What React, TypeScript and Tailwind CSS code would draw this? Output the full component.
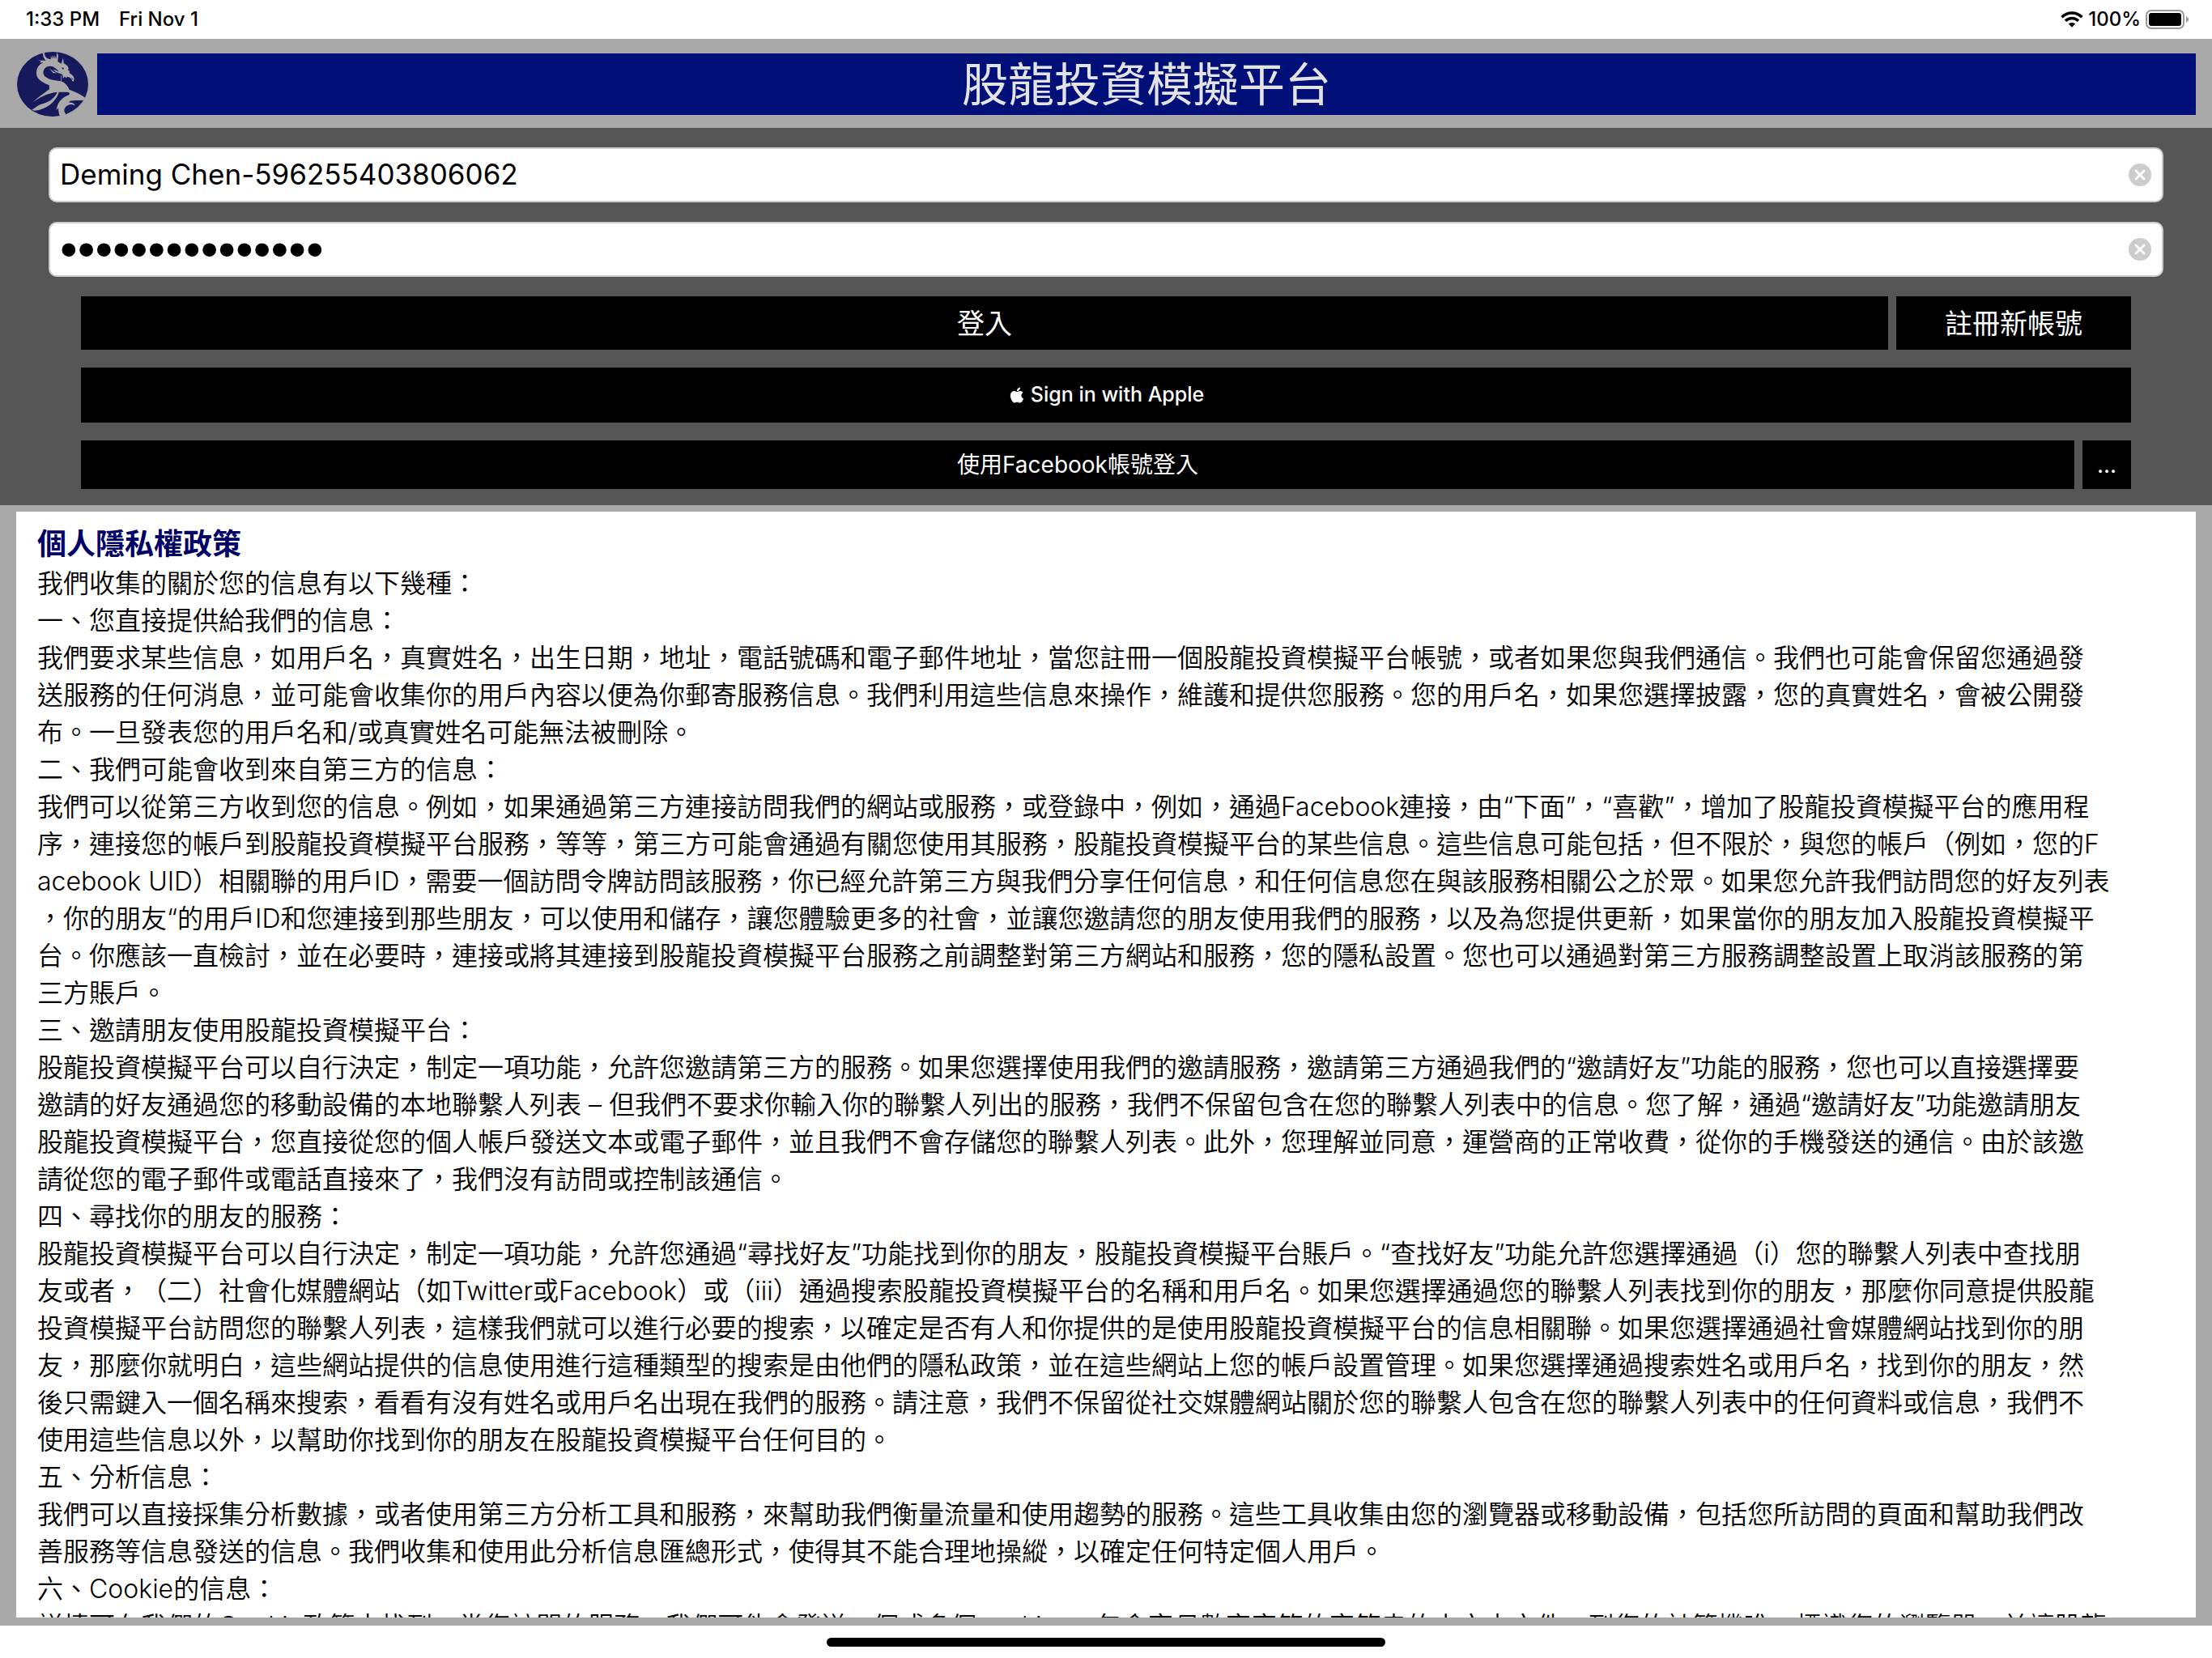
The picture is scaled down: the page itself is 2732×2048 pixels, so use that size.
import { useState } from "react";
import { FaApple } from "react-icons/fa";

const POLICY_TITLE = "個人隱私權政策";

const POLICY_LINES = [
  "我們收集的關於您的信息有以下幾種：",
  "一、您直接提供給我們的信息：",
  "我們要求某些信息，如用戶名，真實姓名，出生日期，地址，電話號碼和電子郵件地址，當您註冊一個股龍投資模擬平台帳號，或者如果您與我們通信。我們也可能會保留您通過發",
  "送服務的任何消息，並可能會收集你的用戶內容以便為你郵寄服務信息。我們利用這些信息來操作，維護和提供您服務。您的用戶名，如果您選擇披露，您的真實姓名，會被公開發",
  "布。一旦發表您的用戶名和/或真實姓名可能無法被刪除。",
  "二、我們可能會收到來自第三方的信息：",
  "我們可以從第三方收到您的信息。例如，如果通過第三方連接訪問我們的網站或服務，或登錄中，例如，通過Facebook連接，由“下面”，“喜歡”，增加了股龍投資模擬平台的應用程",
  "序，連接您的帳戶到股龍投資模擬平台服務，等等，第三方可能會通過有關您使用其服務，股龍投資模擬平台的某些信息。這些信息可能包括，但不限於，與您的帳戶（例如，您的F",
  "acebook UID）相關聯的用戶ID，需要一個訪問令牌訪問該服務，你已經允許第三方與我們分享任何信息，和任何信息您在與該服務相關公之於眾。如果您允許我們訪問您的好友列表",
  "，你的朋友“的用戶ID和您連接到那些朋友，可以使用和儲存，讓您體驗更多的社會，並讓您邀請您的朋友使用我們的服務，以及為您提供更新，如果當你的朋友加入股龍投資模擬平",
  "台。你應該一直檢討，並在必要時，連接或將其連接到股龍投資模擬平台服務之前調整對第三方網站和服務，您的隱私設置。您也可以通過對第三方服務調整設置上取消該服務的第",
  "三方賬戶。",
  "三、邀請朋友使用股龍投資模擬平台：",
  "股龍投資模擬平台可以自行決定，制定一項功能，允許您邀請第三方的服務。如果您選擇使用我們的邀請服務，邀請第三方通過我們的“邀請好友”功能的服務，您也可以直接選擇要",
  "邀請的好友通過您的移動設備的本地聯繫人列表 – 但我們不要求你輸入你的聯繫人列出的服務，我們不保留包含在您的聯繫人列表中的信息。您了解，通過“邀請好友”功能邀請朋友",
  "股龍投資模擬平台，您直接從您的個人帳戶發送文本或電子郵件，並且我們不會存儲您的聯繫人列表。此外，您理解並同意，運營商的正常收費，從你的手機發送的通信。由於該邀",
  "請從您的電子郵件或電話直接來了，我們沒有訪問或控制該通信。",
  "四、尋找你的朋友的服務：",
  "股龍投資模擬平台可以自行決定，制定一項功能，允許您通過“尋找好友”功能找到你的朋友，股龍投資模擬平台賬戶。“查找好友”功能允許您選擇通過（i）您的聯繫人列表中查找朋",
  "友或者，（二）社會化媒體網站（如Twitter或Facebook）或（iii）通過搜索股龍投資模擬平台的名稱和用戶名。如果您選擇通過您的聯繫人列表找到你的朋友，那麼你同意提供股龍",
  "投資模擬平台訪問您的聯繫人列表，這樣我們就可以進行必要的搜索，以確定是否有人和你提供的是使用股龍投資模擬平台的信息相關聯。如果您選擇通過社會媒體網站找到你的朋",
  "友，那麼你就明白，這些網站提供的信息使用進行這種類型的搜索是由他們的隱私政策，並在這些網站上您的帳戶設置管理。如果您選擇通過搜索姓名或用戶名，找到你的朋友，然",
  "後只需鍵入一個名稱來搜索，看看有沒有姓名或用戶名出現在我們的服務。請注意，我們不保留從社交媒體網站關於您的聯繫人包含在您的聯繫人列表中的任何資料或信息，我們不",
  "使用這些信息以外，以幫助你找到你的朋友在股龍投資模擬平台任何目的。",
  "五、分析信息：",
  "我們可以直接採集分析數據，或者使用第三方分析工具和服務，來幫助我們衡量流量和使用趨勢的服務。這些工具收集由您的瀏覽器或移動設備，包括您所訪問的頁面和幫助我們改",
  "善服務等信息發送的信息。我們收集和使用此分析信息匯總形式，使得其不能合理地操縱，以確定任何特定個人用戶。",
  "六、Cookie的信息：",
  "詳情可在我們的Cookie政策中找到。當您訪問的服務，我們可能會發送一個或多個cookies，包含字母數字字符的字符串的小文本文件，到您的計算機唯一標識您的瀏覽器，並讓股龍",
];

const StatusBar = () => (
  <div className="flex h-12 shrink-0 items-center justify-between bg-white pr-7 pl-8 text-2xl font-medium text-black">
    <div className="flex gap-6">
      <span>1:33 PM</span>
      <span>Fri Nov 1</span>
    </div>
    <div className="flex items-center gap-1.5">
      <svg width="28" height="20" viewBox="0 0 28 20" aria-label="Wi-Fi">
        <g fill="none" stroke="#000" strokeWidth="3.6">
          <path d="M1.5 7.2 C8.5 .2 19.5 .2 26.5 7.2" />
          <path d="M6 11.8 C10.5 7.4 17.5 7.4 22 11.8" />
        </g>
        <path d="M9.8 15.6 C12.2 13.4 15.8 13.4 18.2 15.6 L14 19.8 Z" />
      </svg>
      <span>100%</span>
      <svg width="54" height="24" viewBox="0 0 54 24" aria-label="Battery">
        <rect x="1" y="1" width="46" height="22" rx="6" fill="none" stroke="#999" strokeWidth="2" />
        <rect x="4" y="4" width="40" height="16" rx="3" />
        <path d="M50 8 C54 9.5 54 14.5 50 16 Z" fill="#999" />
      </svg>
    </div>
  </div>
);

const DragonLogo = () => (
  <svg className="h-20 w-[88px] shrink-0" viewBox="63 192 264 240" aria-label="股龍">
    <ellipse cx="195" cy="312" rx="132" ry="120" fill="#17195d" />
    <g fill="#a9a9a9">
      <path d="M138 220 L152 226 L148 232 L160 232 C140 240 132 260 136 280 C142 300 165 308 182 316 L183 330 C165 345 140 360 120 380 C145 362 170 346 212 341 C205 362 180 380 152 386 C138 392 128 400 118 407 L128 410 C155 408 185 395 203 370 C212 358 216 350 218 341 L250 341 C260 343 260 349 252 353 C228 362 212 380 209 408 L216 400 C216 410 218 422 222 432 L245 424 C234 412 236 398 252 390 C262 385 270 387 278 392 C276 384 268 379 255 380 L258 375 C275 370 292 373 308 372 L316 362 C300 350 280 340 257 332 C252 320 243 308 230 302 C205 298 185 297 170 286 C156 276 158 256 172 248 C185 243 195 246 204 252 C213 258 216 262 218 266 L210 262 L196 257 C203 265 212 270 222 272 L230 275 C232 282 235 284 232 291 L240 284 L245 289 L250 284 C260 286 266 292 268 300 L272 303 L275 292 C274 282 265 275 257 270 L258 263 L252 260 L254 254 C252 244 246 240 236 235 L234 214 L227 236 L214 228 L216 205 L211 194 L208 218 L203 205 L201 218 L195 203 L194 218 L188 206 L188 220 C176 218 164 212 165 195 L159 196 C158 208 162 218 170 224 L154 224 Z" />
      <path d="M226 280 h2 v22 h-2 Z" />
    </g>
    <path d="M182 252 L196 264 L212 272 L196 270 Z" fill="#a9a9a9" />
    <path d="M228 249 L238 253 L233 258 Z M262 287 L270 292 L268 295 Z" fill="#17195d" />
  </svg>
);

const Header = () => (
  <header className="flex h-[110px] shrink-0 items-center gap-[11px] bg-[#a9a9a9] pt-0.5 pr-5 pl-[21px]">
    <DragonLogo />
    <h1 className="flex h-[76px] flex-1 items-center justify-center bg-[#001078] text-[57px] leading-none font-normal text-[#e3e3e3]">
      股龍投資模擬平台
    </h1>
  </header>
);

interface ClearableFieldProps {
  label: string;
  type: "text" | "password";
  value: string;
  onChange: (value: string) => void;
}

const ClearableField = ({ label, type, value, onChange }: ClearableFieldProps) => (
  <div className="flex h-[68px] items-center overflow-hidden rounded-[10px] border-2 border-[#ccc] bg-white pr-[13px] pl-3">
    <input
      type={type}
      aria-label={label}
      value={value}
      onChange={(e) => onChange(e.target.value)}
      className={
        type === "password"
          ? "h-full min-w-0 flex-1 pb-0.5 font-['Liberation_Sans',sans-serif] text-[62px] text-black outline-none"
          : "h-full min-w-0 flex-1 pb-0.5 text-[35px] text-black outline-none"
      }
    />
    <button type="button" aria-label={`清除${label}`} onClick={() => onChange("")}>
      <svg width="28" height="28" viewBox="0 0 28 28">
        <circle cx="14" cy="14" r="14" fill="#ccc" />
        <path d="M9 9 L19 19 M19 9 L9 19" stroke="#fff" strokeWidth="2.8" strokeLinecap="round" />
      </svg>
    </button>
  </div>
);

const LoginForm = () => {
  const [account, setAccount] = useState("Deming Chen-596255403806062");
  const [password, setPassword] = useState("596255403806062");

  return (
    <form
      className="shrink-0 bg-[#555] px-[60px] pt-6 pb-5"
      onSubmit={(e) => e.preventDefault()}
    >
      <div className="flex flex-col gap-6">
        <ClearableField label="帳號" type="text" value={account} onChange={setAccount} />
        <ClearableField label="密碼" type="password" value={password} onChange={setPassword} />
      </div>
      <div className="mt-6 flex flex-col gap-[22px] px-10 text-white">
        <div className="flex h-[66px] gap-2.5 text-[34px]">
          <button type="submit" className="flex-1 bg-black">
            登入
          </button>
          <button type="button" className="w-[290px] bg-black">
            註冊新帳號
          </button>
        </div>
        <button
          type="button"
          className="flex h-[68px] items-center justify-center gap-1.5 bg-black text-[25px] font-medium"
        >
          <FaApple className="size-[22px]" />
          Sign in with Apple
        </button>
        <div className="flex h-[60px] gap-2.5 text-[28px]">
          <button type="button" className="flex-1 bg-black">
            使用Facebook帳號登入
          </button>
          <button type="button" aria-label="更多登入方式" className="w-[60px] bg-black">
            ...
          </button>
        </div>
      </div>
    </form>
  );
};

const PrivacyPolicy = () => (
  <main className="flex min-h-0 flex-1 bg-[#a9a9a9] px-5 pt-2 pb-2.5">
    <article className="flex-1 overflow-hidden bg-white px-[26px] pt-3.5 whitespace-pre text-black">
      <h2 className="text-4xl leading-[52px] font-bold text-[#000066]">{POLICY_TITLE}</h2>
      {POLICY_LINES.map((line) => (
        <p key={line} className="text-[32px] leading-[46px] font-[350]">
          {line}
        </p>
      ))}
    </article>
  </main>
);

export default function App() {
  return (
    <div
      lang="zh-Hant"
      className="flex h-screen flex-col bg-white font-['Inter','Noto_Sans_CJK_TC',sans-serif] [text-spacing-trim:space-all]"
    >
      <StatusBar />
      <Header />
      <LoginForm />
      <PrivacyPolicy />
      <footer className="flex h-10 shrink-0 items-center justify-center bg-white">
        <div className="h-[11px] w-[690px] rounded-full bg-black" />
      </footer>
    </div>
  );
}
